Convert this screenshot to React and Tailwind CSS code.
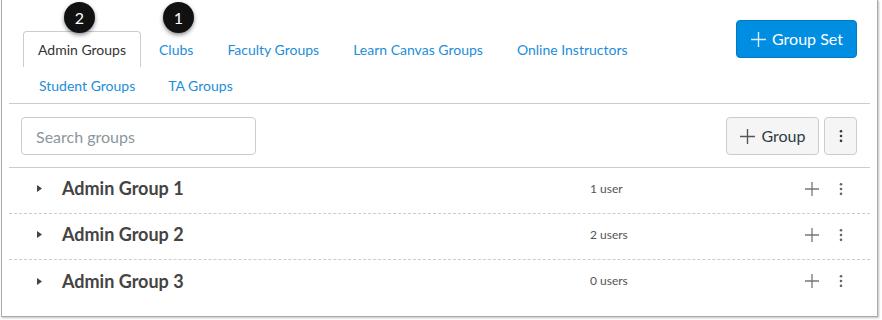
import React from 'react';

const tabsRow1 = ['Admin Groups', 'Clubs', 'Faculty Groups', 'Learn Canvas Groups', 'Online Instructors'];
const tabsRow2 = ['Student Groups', 'TA Groups'];

const groups = [
  { name: 'Admin Group 1', users: '1 user' },
  { name: 'Admin Group 2', users: '2 users' },
  { name: 'Admin Group 3', users: '0 users' },
];

const PlusIcon = ({ className }) => (
  <svg viewBox="0 0 16 16" className={className} fill="none" stroke="currentColor" strokeWidth="1.3">
    <path d="M8 1v14M1 8h14" />
  </svg>
);

const Kebab = ({ className }) => (
  <svg viewBox="0 0 4 16" className={className} fill="currentColor">
    <circle cx="2" cy="2.5" r="1.5" />
    <circle cx="2" cy="8" r="1.5" />
    <circle cx="2" cy="13.5" r="1.5" />
  </svg>
);

// numbered callout
const Badge = ({ n, className }) => (
  <div
    className={
      'absolute w-[31px] h-[31px] rounded-full bg-[#111] text-white text-[16px] flex items-center justify-center shadow-[0_2px_4px_rgba(0,0,0,0.45)] ' +
      className
    }
  >
    {n}
  </div>
);

const Tab = ({ label, active }) =>
  active ? (
    <div className="h-9 px-[14px] flex items-center border border-b-0 border-[#c7cdd1] rounded-t-[4px] bg-white text-[#333]">
      {label}
    </div>
  ) : (
    <div className="h-9 px-4 flex items-center text-[#1d8ed8]">{label}</div>
  );

export default function App() {
  return (
    <div className="bg-white w-[882px] h-[320px] font-['Lato','Noto_Sans',sans-serif] text-[14px]">
      <div className="relative ml-px w-[877px] h-[317px] border border-t-0 border-[#a9a9a9] shadow-[1px_1px_2px_rgba(0,0,0,0.25)] bg-white px-[7px]">
        <Badge n="2" className="left-[62px] top-[2px]" />
        <Badge n="1" className="left-[161px] top-[2px]" />

        {/* Header: tabs + group set */}
        <div className="flex justify-between items-start border-b border-[#c7cdd1]">
          <div className="pt-[31px] pl-[14px] flex flex-col">
            <div className="flex gap-[2px]">
              {tabsRow1.map((t, i) => (
                <Tab key={t} label={t} active={i === 0} />
              ))}
            </div>
            <div className="flex gap-px">
              {tabsRow2.map((t) => (
                <Tab key={t} label={t} />
              ))}
            </div>
          </div>
          <button className="mt-5 mr-[13px] h-[38px] w-[121px] rounded-[4px] bg-[#008ee2] border border-[#0079c1] text-white text-[16px] flex items-center justify-center gap-[5px]">
            <PlusIcon className="w-[17px] h-[17px] text-white/85" />
            Group Set
          </button>
        </div>

        {/* Toolbar */}
        <div className="flex items-center justify-between pt-[13px] pb-[12px] px-3 border-b border-[#c7cdd1]">
          <input
            type="text"
            placeholder="Search groups"
            className="w-[235px] h-[38px] px-[14px] border border-[#c7cdd1] rounded-[4px] text-[16px] placeholder:text-[#8b969e] outline-none"
          />
          <div className="flex gap-[5px] mr-px">
            <button className="w-[93px] h-[38px] rounded-[4px] bg-[#f5f5f5] border border-[#c7cdd1] text-[#2d3b45] text-[16px] flex items-center justify-center gap-[5px]">
              <PlusIcon className="w-[17px] h-[17px] text-[#555]" />
              Group
            </button>
            <button className="w-[33px] h-[38px] rounded-[4px] bg-[#f5f5f5] border border-[#c7cdd1] text-[#2d3b45] flex items-center justify-center">
              <Kebab className="w-[4px] h-[14px]" />
            </button>
          </div>
        </div>

        {/* Group rows */}
        <div>
          {groups.map((g, i) => (
            <div
              key={g.name}
              className={
                'h-[46px] pb-[4px] flex items-center ' +
                (i < groups.length - 1 ? 'border-b border-dashed border-[#c7cdd1]' : '')
              }
            >
              <div className="w-[53px] pl-[28px] flex items-center">
                <svg viewBox="0 0 5 7" className="w-[5px] h-[7px] text-[#444]" fill="currentColor">
                  <path d="M0 0l5 3.5-5 3.5z" />
                </svg>
              </div>
              <div className="w-[528px] font-bold text-[18px] text-[#444]">{g.name}</div>
              <div className="flex-1 text-[12px] text-[#555]">{g.users}</div>
              <div className="flex items-center gap-[19px] pr-[27px]">
                <PlusIcon className="w-[16px] h-[16px] text-[#777]" />
                <Kebab className="w-[4px] h-[14px] text-[#666]" />
              </div>
            </div>
          ))}
        </div>
      </div>
    </div>
  );
}
